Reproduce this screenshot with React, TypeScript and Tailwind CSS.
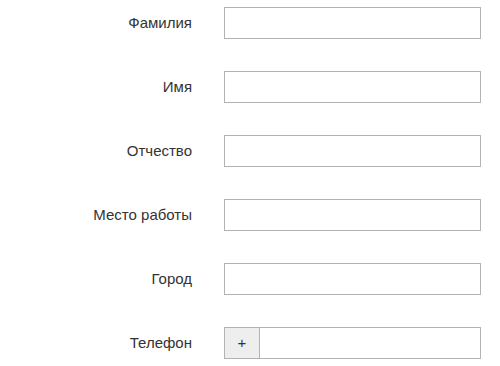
const fields = ['Фамилия', 'Имя', 'Отчество', 'Место работы', 'Город'];

export default function App() {
  return (
    <div className="w-[500px] h-[366px] bg-white font-['Liberation_Sans',Arial,sans-serif] text-[15px] text-[#333] pt-[7px]">
      <div className="flex flex-col gap-8">
        {fields.map((label) => (
          <div key={label} className="flex items-center h-8">
            <label className="w-[192px] text-right">{label}</label>
            <input
              type="text"
              className="ml-8 w-[257px] h-8 border border-[#b3b3b3] bg-white outline-none px-2"
            />
          </div>
        ))}
        <div className="flex items-center h-8">
          <label className="w-[192px] text-right">Телефон</label>
          <div className="ml-8 w-[257px] h-8 flex border border-[#b3b3b3]">
            <span className="w-[35px] flex items-center justify-center bg-[#eeeeee] border-r border-[#b3b3b3] text-[#333]">
              +
            </span>
            <input type="text" className="flex-1 min-w-0 outline-none px-2" />
          </div>
        </div>
      </div>
    </div>
  );
}
